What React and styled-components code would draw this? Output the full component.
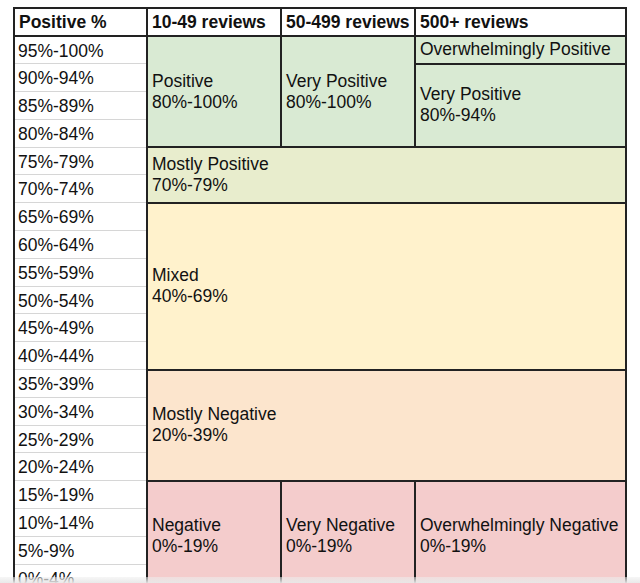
import React from "react";
import styled, { createGlobalStyle } from "styled-components";

const Global = createGlobalStyle`
  html, body {
    margin: 0;
    padding: 0;
    background: #ffffff;
    height: 583px;
    overflow: hidden;
  }
  body {
    font-family: "Liberation Sans", Arial, sans-serif;
    color: #111;
  }
`;

const Page = styled.div`
  position: relative;
  height: 583px;
  overflow: hidden;
  padding: 7px 0 0 13px;
  box-sizing: border-box;
`;

const Sheet = styled.table`
  border-collapse: collapse;
  table-layout: fixed;
  width: 612px;
  font-size: 17.5px;
  line-height: 21px;
`;

const HeadRow = styled.tr`
  height: 28px;
`;

const BodyRow = styled.tr`
  height: 27.8px;
`;

const HeaderCell = styled.th`
  border: 2px solid #222;
  background: #fff;
  font-weight: 700;
  text-align: left;
  padding: 0 4px;
  white-space: nowrap;
  overflow: hidden;
  vertical-align: middle;
`;

const RangeCell = styled.td`
  border-left: 2px solid #222;
  border-right: 2px solid #222;
  border-top: 1px solid #d6d6d6;
  border-bottom: 1px solid #d6d6d6;
  background: #fff;
  padding: 2px 3px 0;
  white-space: nowrap;
  vertical-align: middle;
`;

const tones = {
  green: "#d9ead3",
  lime: "#e8edcd",
  yellow: "#fff2cc",
  orange: "#fce5cd",
  red: "#f4cccc",
};

const BandCell = styled.td`
  border: 2px solid #222;
  border-top-color: ${(p) => (p.$open ? tones[p.$tone] : "#222")};
  background: ${(p) => tones[p.$tone]};
  padding: 0 4px;
  white-space: nowrap;
  vertical-align: middle;
`;

const Fade = styled.div`
  position: absolute;
  left: 0;
  right: 0;
  bottom: 0;
  height: 6px;
  background: linear-gradient(
    to bottom,
    rgba(238, 238, 238, 0.5),
    rgba(232, 232, 232, 0.95)
  );
`;

const ranges = [
  "95%-100%",
  "90%-94%",
  "85%-89%",
  "80%-84%",
  "75%-79%",
  "70%-74%",
  "65%-69%",
  "60%-64%",
  "55%-59%",
  "50%-54%",
  "45%-49%",
  "40%-44%",
  "35%-39%",
  "30%-34%",
  "25%-29%",
  "20%-24%",
  "15%-19%",
  "10%-14%",
  "5%-9%",
  "0%-4%",
];

const Label = ({ title, span }) => (
  <>
    {title}
    <br />
    {span}
  </>
);

const bands = {
  0: [
    <BandCell key="a" $tone="green" rowSpan={4}>
      <Label title="Positive" span="80%-100%" />
    </BandCell>,
    <BandCell key="b" $tone="green" rowSpan={4}>
      <Label title="Very Positive" span="80%-100%" />
    </BandCell>,
    <BandCell key="c" $tone="green">
      Overwhelmingly Positive
    </BandCell>,
  ],
  1: [
    <BandCell key="d" $tone="green" rowSpan={3}>
      <Label title="Very Positive" span="80%-94%" />
    </BandCell>,
  ],
  4: [
    <BandCell key="e" $tone="lime" rowSpan={2} colSpan={3}>
      <Label title="Mostly Positive" span="70%-79%" />
    </BandCell>,
  ],
  6: [
    <BandCell key="f" $tone="yellow" rowSpan={6} colSpan={3}>
      <Label title="Mixed" span="40%-69%" />
    </BandCell>,
  ],
  12: [
    <BandCell key="g" $tone="orange" rowSpan={4} colSpan={3}>
      <Label title="Mostly Negative" span="20%-39%" />
    </BandCell>,
  ],
  16: [
    <BandCell key="h" $tone="red" rowSpan={4}>
      <Label title="Negative" span="0%-19%" />
    </BandCell>,
    <BandCell key="i" $tone="red" rowSpan={4}>
      <Label title="Very Negative" span="0%-19%" />
    </BandCell>,
    <BandCell key="j" $tone="red" rowSpan={4}>
      <Label title="Overwhelmingly Negative" span="0%-19%" />
    </BandCell>,
  ],
};

export default function App() {
  return (
    <>
      <Global />
      <Page>
        <Sheet>
          <colgroup>
            <col style={{ width: 133 }} />
            <col style={{ width: 134 }} />
            <col style={{ width: 134 }} />
            <col style={{ width: 211 }} />
          </colgroup>
          <thead>
            <HeadRow>
              <HeaderCell>Positive %</HeaderCell>
              <HeaderCell>10-49 reviews</HeaderCell>
              <HeaderCell>50-499 reviews</HeaderCell>
              <HeaderCell>500+ reviews</HeaderCell>
            </HeadRow>
          </thead>
          <tbody>
            {ranges.map((r, i) => (
              <BodyRow key={r}>
                <RangeCell>{r}</RangeCell>
                {bands[i] || null}
              </BodyRow>
            ))}
          </tbody>
        </Sheet>
        <Fade />
      </Page>
    </>
  );
}
